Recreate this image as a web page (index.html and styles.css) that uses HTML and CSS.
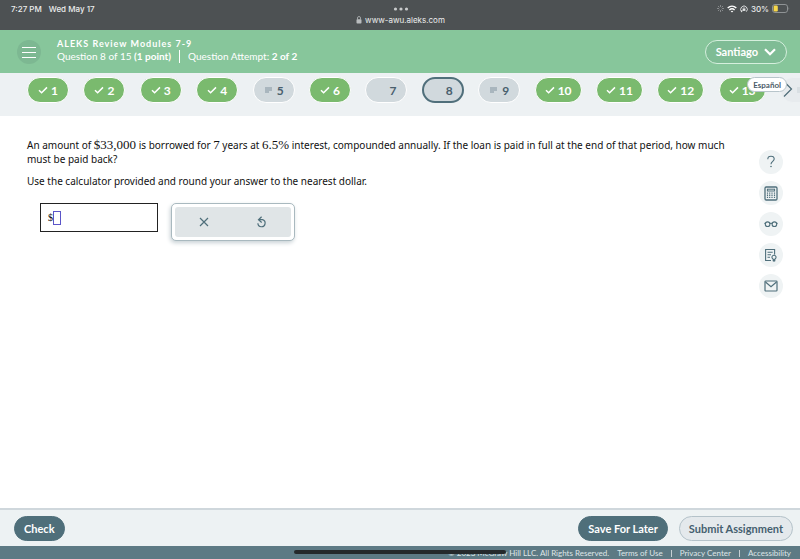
FILE: index.html
```html
<!DOCTYPE html>
<html lang="en">
<head>
<meta charset="utf-8">
<meta name="viewport" content="width=device-width, initial-scale=1">
<title>ALEKS Review Modules 7-9</title>
<link rel="stylesheet" href="styles.css">
</head>
<body>
<svg class="defs" aria-hidden="true">
  <symbol id="tick" viewBox="0 0 10 8"><path d="M1 4.3 3.6 6.8 9 1.4" fill="none" stroke="currentColor" stroke-width="1.5"/></symbol>
  <symbol id="lines" viewBox="0 0 10 8"><path d="M1 2h7M1 4h7M1 6h4" fill="none" stroke="currentColor" stroke-width="1.1"/></symbol>
</svg>

<div class="browser">
  <div class="status">
    <div class="clock"><span>7:27 PM</span><span>Wed May 17</span></div>
    <svg class="dots" width="16" height="4" viewBox="0 0 16 4"><g fill="#c9cbcc"><circle cx="2.5" cy="2" r="1.6"/><circle cx="8" cy="2" r="1.6"/><circle cx="13.500" cy="2" r="1.6"/></g></svg>
    <div class="indicators">
      <svg width="7" height="7" viewBox="0 0 7 7"><path d="M3.500 0v2M3.500 5v2M0 3.500h2M5 3.500h2M1 1l1.400 1.400M4.600 4.600 6 6M6 1 4.600 2.400M1 6l1.400-1.400" stroke="#a0a3a5" stroke-width=".7"/></svg>
      <svg width="10" height="8" viewBox="0 0 10 8"><g fill="none" stroke="#fff" stroke-width="1.400"><path d="M.7 3C3.200.6 6.800.6 9.300 3M2.400 4.900c1.500-1.400 3.700-1.400 5.200 0"/></g><path d="M3.700 6.200c.8-.7 1.800-.7 2.600 0L5 7.600z" fill="#fff"/></svg>
      <svg width="8" height="8" viewBox="0 0 8 8"><path d="M1.700 6.700A3.300 3.300 0 1 1 6.300 6.700" fill="none" stroke="#e4e5e6" stroke-width=".9"/><path d="M.4 5.500 2.800 5.600 1.500 7.600z" fill="#e4e5e6"/><rect x="2.600" y="3.700" width="2.800" height="2.200" fill="#e4e5e6"/><path d="M3.200 3.800V3q.8-.9 1.600 0v.8" fill="none" stroke="#e4e5e6" stroke-width=".6"/></svg>
      <span>30%</span>
      <svg width="18" height="9" viewBox="0 0 18 9"><rect x=".5" y=".5" width="15" height="8" rx="2.400" fill="none" stroke="#8f9395"/><rect x="1.600" y="1.600" width="4.200" height="5.800" rx="1.200" fill="#f7d74a"/><path d="M16.600 3q1.200 1.500 0 3z" fill="#8f9395"/></svg>
    </div>
  </div>
  <div class="address">
    <svg width="6" height="8" viewBox="0 0 6 8"><rect x=".5" y="3.200" width="5" height="4.300" rx=".8" fill="#b9bcbe"/><path d="M1.500 3.500V2q0-1.500 1.500-1.500T4.500 2v1.500" fill="none" stroke="#b9bcbe" stroke-width=".8"/></svg>
    <span>www-awu.aleks.com</span>
  </div>
</div>

<header class="top">
  <button class="menu" aria-label="Menu"><svg width="14" height="12" viewBox="0 0 14 12"><path d="M0 1.500h14M0 6.500h14M0 11.500h14" stroke="#fff" stroke-width="1"/></svg></button>
  <div class="heading">
    <h1>ALEKS Review Modules 7-9</h1>
    <p><span>Question 8 of 15 <b>(1 point)</b></span><span class="attempt">Question Attempt: <b>2 of 2</b></span></p>
  </div>
  <button class="user">Santiago<svg width="12" height="8" viewBox="0 0 12 8"><path d="M1 1.300 6 6.300 11 1.300" fill="none" stroke="#fff" stroke-width="2.200"/></svg></button>
</header>

<nav class="questions" aria-label="Questions">
  <div class="track">
    <a class="pill done" href="#"><svg class="mark"><use href="#tick"/></svg>1</a>
    <a class="pill done" href="#"><svg class="mark"><use href="#tick"/></svg>2</a>
    <a class="pill done" href="#"><svg class="mark"><use href="#tick"/></svg>3</a>
    <a class="pill done" href="#"><svg class="mark"><use href="#tick"/></svg>4</a>
    <a class="pill" href="#"><svg class="mark"><use href="#lines"/></svg>5</a>
    <a class="pill done" href="#"><svg class="mark"><use href="#tick"/></svg>6</a>
    <a class="pill" href="#"><svg class="mark"></svg>7</a>
    <a class="pill current" href="#" aria-current="page"><svg class="mark"></svg>8</a>
    <a class="pill" href="#"><svg class="mark"><use href="#lines"/></svg>9</a>
    <a class="pill done" href="#"><svg class="mark"><use href="#tick"/></svg>10</a>
    <a class="pill done" href="#"><svg class="mark"><use href="#tick"/></svg>11</a>
    <a class="pill done" href="#"><svg class="mark"><use href="#tick"/></svg>12</a>
    <a class="pill done" href="#"><svg class="mark"><use href="#tick"/></svg>13</a>
    <a class="pill faded" href="#" aria-label="Next question"><svg class="mark"><use href="#lines"/></svg></a>
  </div>
  <button class="next" aria-label="Scroll right"><svg width="10" height="18" viewBox="0 0 10 18"><path d="M1 1.500 8.500 9 1 16.500" fill="none" stroke="#4d6b77" stroke-width="1.200"/></svg></button>
  <button class="language">Español</button>
</nav>

<main class="content">
  <section class="problem">
    <p>An amount of <span class="math">$33,000</span> is borrowed for <span class="math">7</span> years at <span class="math">6.5%</span> interest, compounded annually. If the loan is paid in full at the end of that period, how much must be paid back?</p>
    <p>Use the calculator provided and round your answer to the nearest dollar.</p>
    <div class="work">
      <label class="answer"><span>$</span><input type="text" aria-label="Answer in dollars"></label>
      <div class="palette">
        <button aria-label="Clear"><svg width="10" height="10" viewBox="0 0 10 10"><path d="M1 1l8 8M9 1 1 9" stroke="#4f6f7b" stroke-width="1.200"/></svg></button>
        <button aria-label="Undo"><svg width="10" height="12" viewBox="0 0 10 12"><path d="M4.600.7 1.500 3.700l3.200 2.800M1.700 3.700h3.800a3.600 3.600 0 1 1-4.600 3.600" fill="none" stroke="#4f6f7b" stroke-width="1.200"/></svg></button>
      </div>
    </div>
  </section>
  <aside class="tools">
    <button aria-label="Help"><svg width="10" height="14" viewBox="0 0 10 14"><path d="M1.800 4.200C1.800 2 3.200 1.300 5 1.300s3.200 1.100 3.200 2.800C8.200 6.400 5 6.400 5 9.300" fill="none" stroke="#4f6f7b" stroke-width="1.100"/><circle cx="5" cy="11.500" r=".8" fill="#4f6f7b"/></svg></button>
    <button aria-label="Calculator"><svg width="14" height="15" viewBox="0 0 14 15"><rect x="1" y="1" width="12" height="13" rx="1.200" fill="none" stroke="#4f6f7b" stroke-width="1.300"/><rect x="3.400" y="3.200" width="7.200" height="1.800" fill="none" stroke="#4f6f7b"/><path d="M3.500 6.500v6M5.700 6.500v6M8 6.500v6M10.500 6.500v6" stroke="#4f6f7b" stroke-width="1.200" stroke-dasharray="1.300 .8"/></svg></button>
    <button aria-label="Reading view"><svg width="14" height="8" viewBox="0 0 14 8"><g fill="none" stroke="#4f6f7b" stroke-width="1.100"><circle cx="3.600" cy="4.200" r="2.300"/><circle cx="10.400" cy="4.200" r="2.300"/><path d="M5.800 3.600q1.200-.7 2.400 0M.4 3.200l1 .4M13.600 3.200l-1 .4"/></g></svg></button>
    <button aria-label="Notes"><svg width="14" height="15" viewBox="0 0 14 15"><g fill="none" stroke="#4f6f7b" stroke-width="1.100"><path d="M7 12.500H1.600v-11h9v5M3.500 4.200h5.200M3.500 6.700h3.500M3.500 9.200h2.500M9.200 11.200C7 9.600 8 7.200 10 7.200s3 2.400.8 4v1.600H9.200z"/></g><path d="M9.200 11h1.600v2.600H9.200z" fill="#4f6f7b"/></svg></button>
    <button aria-label="Message"><svg width="14" height="12" viewBox="0 0 14 12"><rect x="1" y="1" width="12" height="10" rx=".8" fill="none" stroke="#4f6f7b" stroke-width="1.200"/><path d="M1.500 2 7 6.800 12.500 2" fill="none" stroke="#4f6f7b" stroke-width="1.200"/></svg></button>
  </aside>
</main>

<div class="actions">
  <button class="btn">Check</button>
  <button class="btn later">Save For Later</button>
  <button class="btn light">Submit Assignment</button>
</div>
<footer class="legal">
  <span>© 2023 McGraw Hill LLC. All Rights Reserved.</span>
  <a href="#">Terms of Use</a><i></i><a href="#">Privacy Center</a><i></i><a href="#">Accessibility</a>
  <div class="home"></div>
</footer>
</body>
</html>
```

FILE: styles.css
```css
* { box-sizing: border-box; }
body {
  margin: 0;
  height: 100vh;
  display: flex;
  flex-direction: column;
  overflow: hidden;
  background: #fff;
  font-family: Lato, "Liberation Sans", sans-serif;
}
h1, p { margin: 0; }
button {
  border: 0;
  padding: 0;
  background: none;
  font: inherit;
  color: inherit;
  display: flex;
  align-items: center;
  justify-content: center;
}
a { color: inherit; text-decoration: none; }
svg { display: block; flex: none; }
.defs { position: absolute; width: 0; height: 0; }

.browser {
  background: #4d5153;
  color: #eceded;
  font-family: Inter, "Liberation Sans", sans-serif;
  font-size: 8px;
  padding: 3px 10px 4px 11px;
}
.status {
  display: grid;
  grid-template-columns: 1fr auto 1fr;
  align-items: center;
  height: 11px;
  font-weight: 500;
}
.clock { display: flex; gap: 7px; }
.indicators { display: flex; gap: 3px; align-items: center; justify-content: flex-end; }
.address {
  display: flex;
  align-items: center;
  justify-content: center;
  gap: 3px;
  height: 12px;
  font-size: 8px;
}

.top {
  display: flex;
  align-items: center;
  height: 43px;
  padding: 0 13px 0 17px;
  background: #87c69b;
  color: #fff;
}
.menu { width: 24px; height: 24px; border-radius: 50%; background: #7db892; }
.heading { flex: 1; margin-left: 16px; padding-bottom: 3px; font-size: 10px; line-height: 13px; }
.heading h1 { font-size: 9px; line-height: 13px; font-weight: 700; letter-spacing: 1px; }
.heading p { display: flex; gap: 8px; }
.attempt { border-left: 1px solid #fff; padding-left: 8px; }
.user {
  height: 24px;
  padding: 0 10px;
  gap: 6px;
  border: 1px solid #d5efdd;
  border-radius: 12px;
  background: #7fbc95;
  font-size: 11px;
  font-weight: 700;
}

.questions {
  position: relative;
  height: 43px;
  padding: 4px 0 0 27px;
  overflow: hidden;
  background: #edf1f3;
}
.track { display: flex; justify-content: space-between; margin-right: -22px; }
.pill {
  display: flex;
  align-items: center;
  justify-content: center;
  gap: 3px;
  min-width: 42px;
  height: 26px;
  padding: 0 9px;
  border: 1px solid #fff;
  border-radius: 13px;
  background: #d1d9dd;
  color: #49606d;
  font-size: 12px;
  font-weight: 700;
}
.done { background: #7aba6e; color: #fff; }
.current { border: 2px solid #506f7b; }
.faded { background: #e7ebee; border-color: #edf1f3; color: #ccd3d8; }
.mark { width: 10px; height: 8px; }
.pill .mark { color: #8194a0; }
.done .mark { color: #fff; }
.faded .mark { color: #ccd3d8; }
.next { position: absolute; right: 7px; top: 7px; }
.language {
  position: absolute;
  right: 13px;
  top: 4px;
  height: 15px;
  padding: 0 5px;
  border: 1px solid #b8c5cb;
  border-radius: 8px;
  background: #fff;
  color: #4b5c69;
  font-size: 8px;
  font-weight: 700;
}

.content { flex: 1; display: flex; justify-content: space-between; padding-right: 17px; }
.problem {
  flex: 1;
  padding: 22px 24px 0 27px;
  font-family: "Noto Sans", Verdana, sans-serif;
  font-size: 10px;
  line-height: 14px;
  color: #111;
}
.problem p { margin-bottom: 8px; }
.math { font-family: "Liberation Serif", serif; font-size: 13px; line-height: 12px; }
.work { display: flex; gap: 13px; padding: 7px 0 0 13px; }
.answer {
  display: flex;
  align-items: center;
  width: 118px;
  height: 29px;
  padding-left: 7px;
  border: 1px solid #222;
  font-family: "Liberation Serif", serif;
}
.answer input { width: 8px; height: 14px; padding: 0; border: 1px solid #5b55c8; background: #fff; outline: 0; }
.palette {
  display: flex;
  width: 124px;
  height: 38px;
  padding: 3px;
  border: 1px solid #a9b9bf;
  border-radius: 5px;
  background: #fff;
  box-shadow: -1px 2px 4px #c9d2d6;
}
.palette button { flex: 1; background: #e0e5e7; }
.palette button:first-child { border-radius: 3px 0 0 3px; }
.palette button:last-child { border-radius: 0 3px 3px 0; }
.tools { display: flex; flex-direction: column; gap: 7px; padding-top: 34px; }
.tools button { width: 24px; height: 24px; border-radius: 50%; background: #eff3f4; }

.actions {
  display: flex;
  align-items: center;
  gap: 11px;
  height: 38px;
  padding: 0 7px 0 14px;
  border-top: 2px solid #cfd7dc;
  background: #edf2f3;
}
.btn {
  height: 25px;
  padding: 0 9px;
  border: 1px solid #4f6f7a;
  border-radius: 13px;
  background: #4f6f7a;
  color: #fff;
  font-size: 11px;
  font-weight: 700;
}
.later { margin-left: auto; }
.light { background: #e4e9ec; border-color: #b4c2c9; color: #455f6f; }
.legal {
  position: relative;
  display: flex;
  align-items: flex-start;
  justify-content: flex-end;
  gap: 8px;
  height: 13px;
  padding: 2px 9px 0 0;
  background: #5d7a84;
  color: #dfe6e8;
  font-size: 8px;
  line-height: 11px;
  white-space: nowrap;
}
.legal a { border-bottom: 1px solid #8499a1; }
.legal i { width: 1px; height: 7px; margin-top: 2px; background: #c6d0d4; }
.home {
  position: absolute;
  left: 50%;
  top: 4px;
  width: 212px;
  height: 4px;
  transform: translateX(-50%);
  border-radius: 2px;
  background: #25292b;
}
```
